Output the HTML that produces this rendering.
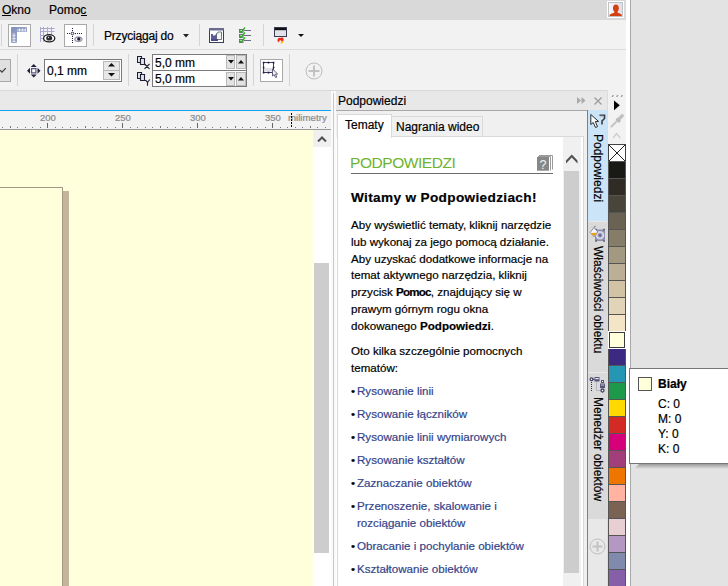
<!DOCTYPE html>
<html><head><meta charset="utf-8">
<style>
*{margin:0;padding:0;box-sizing:border-box}
html,body{width:728px;height:586px;overflow:hidden;background:#e3e3e3;font-family:"Liberation Sans",sans-serif;font-size:12px;color:#000}
.a{position:absolute}
.t{position:absolute;white-space:nowrap;line-height:14px;-webkit-text-stroke:0.2px currentColor}
</style></head><body>
<!-- window frame -->
<div class="a" style="left:0;top:0;width:630px;height:586px;background:#fff"></div>
<div class="a" style="left:630px;top:0;width:1px;height:586px;background:#a8a8a8"></div>

<!-- menu bar -->
<div class="a" style="left:0;top:0;width:626px;height:20px;background:#d9d9d9"></div>
<div class="t" style="left:2px;top:3px">Okno</div>
<div class="a" style="left:2px;top:15px;width:9px;height:1px;background:#000"></div>
<div class="t" style="left:49px;top:3px">Pomoc</div>
<div class="a" style="left:81px;top:15px;width:6px;height:1px;background:#000"></div>
<!-- user icon -->
<div class="a" style="left:607px;top:1px;width:17px;height:17px;background:#fff"></div>
<div class="a" style="left:608px;top:2px;width:15px;height:15px;border:1px solid #c0c4c9;background:linear-gradient(90deg,#f8f8fa,#e8eaf2 60%,#dde0ea)"></div><svg class="a" style="left:608px;top:2px" width="16" height="16" viewBox="0 0 16 16"><ellipse cx="7.9" cy="6.2" rx="2.9" ry="3.6" fill="#d4400f"/><rect x="6.3" y="8" width="3.3" height="3.5" fill="#d4400f"/><path d="M1.3 14 C1.8 11.8 4.2 11.3 6.3 10.8 H9.6 C11.7 11.3 13.6 11.8 14 14Z" fill="#d4400f"/></svg>

<!-- toolbar 1 -->
<div class="a" style="left:0;top:20px;width:626px;height:29px;background:#f2f2f2"></div>
<div class="a" style="left:0;top:49px;width:626px;height:1px;background:#dcdcdc"></div>
<div class="a" style="left:1px;top:24px;width:1px;height:22px;background:#d4d4d4"></div>
<div class="a" style="left:8px;top:24px;width:23px;height:23px;background:#fff;border:1px solid #a9a9a9"></div>
<svg class="a" style="left:11px;top:27px" width="16" height="16" viewBox="0 0 16 16"><defs><linearGradient id="rg" x1="0" y1="0" x2="1" y2="1"><stop offset="0" stop-color="#7f8fb8"/><stop offset="1" stop-color="#aab4d2"/></linearGradient></defs><path d="M1 0 H15 A1 1 0 0 1 16 1 V5 H6 V15 A1 1 0 0 1 5 16 H1 A1 1 0 0 1 0 15 V1 A1 1 0 0 1 1 0Z" fill="url(#rg)"/><path d="M7 4.5V2 M8.5 4.5V1.5 M10 4.5V2 M11.5 4.5V1.5 M13 4.5V2 M14.5 4.5V1.5 M1.5 7H4 M1.5 8.5H4.5 M1.5 10H4 M1.5 11.5H4.5 M1.5 13H4 M1.5 14.5H4.5" stroke="#eef1f8" stroke-width="0.9"/></svg>
<svg class="a" style="left:39px;top:26px" width="18" height="18" viewBox="0 0 18 18"><path d="M1.5 1v15 M4.5 1v15 M8.5 1v8 M12.5 1v7 M1 2.5h14.5 M1 5.5h14.5 M1 9.5h5 M1 12.5h3" stroke="#a9a9d2" stroke-width="1"/><ellipse cx="10.2" cy="12.3" rx="5.6" ry="3.6" fill="#fff" stroke="#1e1e24" stroke-width="1.3"/><ellipse cx="10.2" cy="12" rx="3" ry="2.6" fill="#2a2a30"/><path d="M8.8 10.8 l1.6 0.2 l-0.9 1.3z" fill="#fff"/></svg>
<div class="a" style="left:64px;top:24px;width:23px;height:23px;background:#fff;border:1px solid #a9a9a9"></div>
<svg class="a" style="left:66px;top:27px" width="18" height="17" viewBox="0 0 18 17"><g fill="#1c1c40"><rect x="6" y="1" width="1" height="1"/><rect x="6" y="3" width="1" height="1"/><rect x="6" y="9" width="1" height="1"/><rect x="6" y="11" width="1" height="1"/><rect x="6" y="13" width="1" height="1"/><rect x="6" y="15" width="1" height="1"/><rect x="1" y="6" width="1" height="1"/><rect x="3" y="6" width="1" height="1"/><rect x="9" y="6" width="1" height="1"/><rect x="11" y="6" width="1" height="1"/><rect x="13" y="6" width="1" height="1"/><rect x="15" y="6" width="1" height="1"/></g><circle cx="6.5" cy="6.5" r="1.3" fill="#fff" stroke="#1c1c40" stroke-width="0.9"/><ellipse cx="12.4" cy="12.3" rx="4.3" ry="3" fill="#c9c9d6"/><ellipse cx="12.4" cy="12.3" rx="3.4" ry="2.3" fill="#f0f0f6" stroke="#77778a" stroke-width="0.8"/><circle cx="12.8" cy="12" r="1.7" fill="#202035"/></svg>
<div class="a" style="left:93px;top:24px;width:1px;height:22px;background:#d4d4d4"></div>
<div class="t" style="left:104px;top:29px;letter-spacing:-0.2px">Przyciągaj do</div>
<svg class="a" style="left:183px;top:34px" width="6" height="4"><path d="M0 0h6L3 3.5Z" fill="#222"/></svg>
<div class="a" style="left:199px;top:24px;width:1px;height:22px;background:#d4d4d4"></div>
<svg class="a" style="left:209px;top:28px" width="16" height="16" viewBox="0 0 16 16"><rect x="0.5" y="0.5" width="14" height="14" fill="#fff" stroke="#3c3c55" stroke-width="1"/><rect x="0" y="0" width="15" height="2.5" fill="#6c6c90"/><path d="M2 13 V6 H4 V7.5 L6 7.5 L7 6 H9 V13Z" fill="#5a5aa0"/><path d="M7.5 11.5 V5.5 L9 4 H12.5 V11.5Z" fill="#f4f8f4" stroke="#556" stroke-width="0.8"/><path d="M9 4 L9 5.5 L7.5 5.5" fill="#9cc" stroke="#6a9" stroke-width="0.7"/><rect x="2" y="11" width="7" height="2" fill="#4a4a8a"/></svg>
<svg class="a" style="left:238px;top:26px" width="14" height="17" viewBox="0 0 14 17"><g fill="#eef" stroke="#666680" stroke-width="0.9"><rect x="1.5" y="3.5" width="3.5" height="3"/><rect x="1.5" y="8.5" width="3.5" height="3"/><rect x="1.5" y="13.5" width="3.5" height="3"/></g><path d="M1.8 4.5 L3 6.3 L7 1.5 M1.8 9.5 L3 11.3 L7 6.5 M1.8 14.5 L3 16.3 L7 11.5" stroke="#2eaa1e" stroke-width="1.3" fill="none"/><path d="M6 4.5h7 M6 9.5h7 M6 14.5h7" stroke="#6a6a88" stroke-width="1"/></svg>
<div class="a" style="left:263px;top:24px;width:1px;height:22px;background:#d4d4d4"></div>
<svg class="a" style="left:274px;top:27px" width="14" height="17" viewBox="0 0 14 17"><rect x="0.5" y="0.5" width="12" height="9" fill="#e2e3ea" stroke="#3a3a50" stroke-width="1"/><rect x="1" y="1" width="11" height="2.2" fill="#111"/><path d="M4.5 11 C3 12.5 3 14.5 5 15.5 C5 14 6 13 7 13.5 C8 14.2 7.5 15.5 6.5 16.5 C9 16 10.5 13 9 10.5Z" fill="#f0281c"/><path d="M6.5 16.5 C7.8 15.8 8.2 14.5 7.5 13.8 C8.5 13.5 9.5 14.5 9 16Z" fill="#ffd000"/></svg>
<svg class="a" style="left:298px;top:34px" width="6" height="3"><path d="M0 0h6L3 3Z" fill="#111"/></svg>

<!-- toolbar 2 -->
<div class="a" style="left:0;top:50px;width:626px;height:40px;background:#f2f2f2"></div>
<div class="a" style="left:0;top:90px;width:626px;height:1px;background:#d8d8d8"></div>
<div class="a" style="left:-2px;top:59px;width:13px;height:23px;background:#e0e0e0;border:1px solid #a8a8a8"></div>
<svg class="a" style="left:0;top:67px" width="8" height="7"><path d="M0 3.2L2 5.2L5.8 1.2" stroke="#3a3a3a" stroke-width="1.2" fill="none"/></svg>
<div class="a" style="left:17px;top:54px;width:1px;height:32px;background:#d4d4d4"></div>
<svg class="a" style="left:27px;top:64px" width="14" height="14" viewBox="0 0 14 14"><path d="M6.75 0 L9.75 3 H3.75Z M6.75 13.5 L3.75 10.5 H9.75Z M0 6.75 L3 3.75 V9.75Z M13.5 6.75 L10.5 9.75 V3.75Z" fill="#20203a"/><rect x="4.6" y="4.6" width="4.3" height="4.3" fill="#fff" stroke="#55557a" stroke-width="1.2"/></svg>
<div class="a" style="left:44px;top:59px;width:78px;height:23px;background:#fff;border:1px solid #7a7a7a"></div>
<div class="t" style="left:47px;top:64px">0,1 mm</div>
<div class="a" style="left:103px;top:61px;width:17px;height:10px;background:#e8e8e8;border:1px solid #b9b9b9"></div>
<div class="a" style="left:103px;top:70px;width:17px;height:10px;background:#e8e8e8;border:1px solid #b9b9b9"></div>
<svg class="a" style="left:108px;top:63px" width="7" height="4"><path d="M0 3.5h7L3.5 0Z" fill="#111"/></svg>
<svg class="a" style="left:108px;top:73px" width="7" height="4"><path d="M0 0h7L3.5 3.5Z" fill="#111"/></svg>
<div class="a" style="left:128px;top:54px;width:1px;height:32px;background:#d4d4d4"></div>
<svg class="a" style="left:137px;top:56px" width="14" height="14" viewBox="0 0 14 14"><path d="M0.5 0.5h4v6h-4z" fill="#e4e4f0" stroke="#1f1f33" stroke-width="1.1"/><path d="M3.5 2.5h4v6h-4z" fill="#e4e4f0" stroke="#1f1f33" stroke-width="1.1"/><path d="M7.5 8.5h1.5 M7.5 8 L12.5 12.8 M12.5 8 L7.5 12.8" stroke="#1f1f33" stroke-width="1.1" fill="none"/></svg>
<svg class="a" style="left:137px;top:72px" width="14" height="14" viewBox="0 0 14 14"><path d="M0.5 0.5h4v6h-4z" fill="#e4e4f0" stroke="#1f1f33" stroke-width="1.1"/><path d="M3.5 2.5h4v6h-4z" fill="#e4e4f0" stroke="#1f1f33" stroke-width="1.1"/><path d="M7.5 8.5h1.5 L10.5 10.5 M12.8 7.5 L10.5 10.5 V13.8" stroke="#1f1f33" stroke-width="1.1" fill="none"/></svg>
<div class="a" style="left:152px;top:54px;width:95px;height:33px;background:#fff;border:1px solid #7a7a7a"></div>
<div class="a" style="left:152px;top:70px;width:95px;height:1px;background:#7a7a7a"></div>
<div class="t" style="left:155px;top:56px">5,0 mm</div>
<div class="t" style="left:155px;top:72px">5,0 mm</div>
<div class="a" style="left:226px;top:55px;width:9px;height:14px;background:#e3e3e3;border:1px solid #b9b9b9"></div>
<div class="a" style="left:236px;top:55px;width:10px;height:14px;background:#e3e3e3;border:1px solid #b9b9b9"></div>
<div class="a" style="left:226px;top:72px;width:9px;height:14px;background:#e3e3e3;border:1px solid #b9b9b9"></div>
<div class="a" style="left:236px;top:72px;width:10px;height:14px;background:#e3e3e3;border:1px solid #b9b9b9"></div>
<svg class="a" style="left:228px;top:60px" width="6" height="4"><path d="M0 0h6L3 3.5Z" fill="#111"/></svg>
<svg class="a" style="left:238px;top:60px" width="6" height="4"><path d="M0 3.5h6L3 0Z" fill="#111"/></svg>
<svg class="a" style="left:228px;top:77px" width="6" height="4"><path d="M0 0h6L3 3.5Z" fill="#111"/></svg>
<svg class="a" style="left:238px;top:77px" width="6" height="4"><path d="M0 3.5h6L3 0Z" fill="#111"/></svg>
<div class="a" style="left:253px;top:54px;width:1px;height:32px;background:#d4d4d4"></div>
<div class="a" style="left:260px;top:59px;width:23px;height:23px;background:#fff;border:1px solid #a9a9a9"></div>
<svg class="a" style="left:261px;top:60px" width="20" height="20" viewBox="0 0 20 20"><rect x="2.5" y="8" width="10" height="3.5" fill="#dcdde8"/><rect x="2.5" y="2.5" width="10" height="10" fill="none" stroke="#3c3c60" stroke-width="1"/><path d="M1.8 1.8h1.6v1.6h-1.6zM6.7 1.8h1.6v1.6h-1.6zM11.8 1.8h1.6v1.6h-1.6zM1.8 6.7h1.6v1.6h-1.6zM11.8 6.7h1.6v1.6h-1.6zM1.8 11.8h1.6v1.6h-1.6zM6.7 11.8h1.6v1.6h-1.6z" fill="#1c1c40"/><path d="M11.5 9 L11.5 16 L13.2 14.6 L14.6 17.6 L15.8 17 L14.5 14.2 L16.6 14Z" fill="#f4f4f8" stroke="#50506a" stroke-width="0.9"/></svg>
<div class="a" style="left:289px;top:54px;width:1px;height:32px;background:#d4d4d4"></div>
<svg class="a" style="left:305px;top:62px" width="18" height="18" viewBox="0 0 18 18"><circle cx="9" cy="9" r="8" fill="none" stroke="#bdbdbd" stroke-width="1"/><path d="M9 3.5v11M3.5 9h11" stroke="#c2c2c2" stroke-width="2"/></svg>

<!-- gray region under toolbar (left) -->
<div class="a" style="left:0;top:91px;width:331px;height:19px;background:#e9e9e9"></div>
<div class="a" style="left:0;top:110px;width:331px;height:1px;background:#12a2f2"></div>
<!-- ruler -->
<div class="a" style="left:0;top:111px;width:331px;height:18px;background:#f2f2f2"></div>
<div class="a" style="left:0;top:129px;width:331px;height:1px;background:#9a9a9a"></div>
<div id="ruler"><div class="a" style="left:2px;top:127px;width:1px;height:1px;background:#777"></div><div class="a" style="left:10px;top:126px;width:1px;height:2px;background:#777"></div><div class="a" style="left:17px;top:127px;width:1px;height:1px;background:#777"></div><div class="a" style="left:25px;top:127px;width:1px;height:1px;background:#777"></div><div class="a" style="left:32px;top:127px;width:1px;height:1px;background:#777"></div><div class="a" style="left:40px;top:127px;width:1px;height:1px;background:#777"></div><div class="a" style="left:47px;top:123px;width:1px;height:5px;background:#666"></div><div class="a" style="left:55px;top:127px;width:1px;height:1px;background:#777"></div><div class="a" style="left:62px;top:127px;width:1px;height:1px;background:#777"></div><div class="a" style="left:70px;top:127px;width:1px;height:1px;background:#777"></div><div class="a" style="left:77px;top:127px;width:1px;height:1px;background:#777"></div><div class="a" style="left:85px;top:126px;width:1px;height:2px;background:#777"></div><div class="a" style="left:92px;top:127px;width:1px;height:1px;background:#777"></div><div class="a" style="left:100px;top:127px;width:1px;height:1px;background:#777"></div><div class="a" style="left:107px;top:127px;width:1px;height:1px;background:#777"></div><div class="a" style="left:115px;top:127px;width:1px;height:1px;background:#777"></div><div class="a" style="left:122px;top:123px;width:1px;height:5px;background:#666"></div><div class="a" style="left:130px;top:127px;width:1px;height:1px;background:#777"></div><div class="a" style="left:137px;top:127px;width:1px;height:1px;background:#777"></div><div class="a" style="left:145px;top:127px;width:1px;height:1px;background:#777"></div><div class="a" style="left:152px;top:127px;width:1px;height:1px;background:#777"></div><div class="a" style="left:160px;top:126px;width:1px;height:2px;background:#777"></div><div class="a" style="left:167px;top:127px;width:1px;height:1px;background:#777"></div><div class="a" style="left:175px;top:127px;width:1px;height:1px;background:#777"></div><div class="a" style="left:182px;top:127px;width:1px;height:1px;background:#777"></div><div class="a" style="left:190px;top:127px;width:1px;height:1px;background:#777"></div><div class="a" style="left:197px;top:123px;width:1px;height:5px;background:#666"></div><div class="a" style="left:205px;top:127px;width:1px;height:1px;background:#777"></div><div class="a" style="left:212px;top:127px;width:1px;height:1px;background:#777"></div><div class="a" style="left:220px;top:127px;width:1px;height:1px;background:#777"></div><div class="a" style="left:227px;top:127px;width:1px;height:1px;background:#777"></div><div class="a" style="left:235px;top:126px;width:1px;height:2px;background:#777"></div><div class="a" style="left:242px;top:127px;width:1px;height:1px;background:#777"></div><div class="a" style="left:250px;top:127px;width:1px;height:1px;background:#777"></div><div class="a" style="left:257px;top:127px;width:1px;height:1px;background:#777"></div><div class="a" style="left:265px;top:127px;width:1px;height:1px;background:#777"></div><div class="a" style="left:272px;top:123px;width:1px;height:5px;background:#666"></div><div class="a" style="left:280px;top:127px;width:1px;height:1px;background:#777"></div><div class="a" style="left:287px;top:127px;width:1px;height:1px;background:#777"></div><div class="a" style="left:295px;top:127px;width:1px;height:1px;background:#777"></div><div class="a" style="left:302px;top:127px;width:1px;height:1px;background:#777"></div><div class="a" style="left:310px;top:126px;width:1px;height:2px;background:#777"></div><div class="a" style="left:317px;top:127px;width:1px;height:1px;background:#777"></div><div class="a" style="left:325px;top:127px;width:1px;height:1px;background:#777"></div><div class="t" style="left:40px;top:112px;font-size:9.5px;line-height:12px;color:#8a8a8a">200</div><div class="t" style="left:115px;top:112px;font-size:9.5px;line-height:12px;color:#8a8a8a">250</div><div class="t" style="left:190px;top:112px;font-size:9.5px;line-height:12px;color:#8a8a8a">300</div><div class="t" style="left:265px;top:112px;font-size:9.5px;line-height:12px;color:#8a8a8a">350</div><div class="t" style="left:288px;top:112px;font-size:9.7px;line-height:12px;color:#8a8a8a">milimetry</div><div class="a" style="left:291px;top:113px;width:1px;height:15px;background:repeating-linear-gradient(#000 0 2px,transparent 2px 3px)"></div></div><!--/ruler-->
<!-- canvas -->
<div class="a" style="left:0;top:130px;width:313px;height:456px;background:#ffffdc"></div>
<div class="a" style="left:-1px;top:187px;width:64px;height:400px;border:1px solid #a39883;border-left:none;border-bottom:none"></div>
<div class="a" style="left:63px;top:191px;width:6px;height:395px;background:#c4b59c"></div>
<!-- canvas scrollbar -->
<div class="a" style="left:313px;top:130px;width:18px;height:456px;background:#fff"></div>
<div class="a" style="left:313px;top:130px;width:18px;height:17px;background:#f0f0f0"></div>
<svg class="a" style="left:317px;top:136px" width="10" height="6"><path d="M1 5.5L5 1.5L9 5.5" stroke="#505050" stroke-width="2" fill="none"/></svg>
<div class="a" style="left:314px;top:263px;width:15px;height:290px;background:#cdcdcd"></div>
<!-- splitter -->
<div class="a" style="left:331px;top:91px;width:5px;height:495px;background:#fafafa"></div>
<div class="a" style="left:333px;top:93px;width:1px;height:493px;background:#c8c8c8"></div>

<!-- docker -->
<div class="a" style="left:336px;top:91px;width:271px;height:19px;background:#e8e8e8"></div>
<div class="a" style="left:336px;top:110px;width:251px;height:1px;background:#a8a8a8"></div>
<div class="t" style="left:338px;top:94px">Podpowiedzi</div>
<svg class="a" style="left:577px;top:97px" width="9" height="7"><path d="M0 0l4 3.5L0 7zM4.5 0l4 3.5L4.5 7z" fill="#a9a9a9"/></svg>
<svg class="a" style="left:594px;top:97px" width="8" height="8"><path d="M0.5 0.5l7 7M7.5 0.5l-7 7" stroke="#9a9a9a" stroke-width="1.2"/></svg>
<div class="a" style="left:336px;top:111px;width:251px;height:475px;background:#f0f0f0"></div><div class="a" style="left:336px;top:137px;width:1px;height:449px;background:#fff"></div>
<!-- tabs -->
<div class="a" style="left:391px;top:116px;width:92px;height:21px;background:#f0f0f0;border:1px solid #d9d9d9;border-bottom:none"></div>
<div class="t" style="left:396px;top:120px">Nagrania wideo</div>
<div class="a" style="left:337px;top:136px;width:247px;height:450px;background:#fff;border:1px solid #d9d9d9;border-bottom:none"></div>
<div class="a" style="left:337px;top:114px;width:55px;height:24px;background:#fff;border:1px solid #d9d9d9;border-bottom:none"></div>
<div class="t" style="left:345px;top:118px">Tematy</div>
<!-- help scrollbar -->
<div class="a" style="left:563px;top:137px;width:18px;height:449px;background:#f0f0f0"></div>
<svg class="a" style="left:566px;top:154px" width="12" height="10" viewBox="0 0 12 10"><path d="M0 6.5 L5.75 0.5 L11.5 6.5 V9.5 L5.75 3.5 L0 9.5Z" fill="#505050"/></svg>
<div class="a" style="left:564px;top:171px;width:15px;height:402px;background:#cdcdcd"></div>

<!-- help content -->
<div class="t" style="left:350px;top:154px;font-size:15.5px;line-height:17px;color:#6cb42e;letter-spacing:-0.45px;-webkit-text-stroke:0">PODPOWIEDZI</div>
<svg class="a" style="left:536px;top:155px" width="18" height="17" viewBox="0 0 18 17"><path d="M3 0.5 H16.5 V14.5" fill="none" stroke="#9a9a9a" stroke-width="1"/><path d="M2 1.5 H14.5 V15.5" fill="none" stroke="#9a9a9a" stroke-width="1"/><rect x="13" y="2" width="1" height="13.5" fill="#fff"/><rect x="1" y="2" width="12" height="13.7" fill="#878787"/><text x="7" y="13.5" font-family="Liberation Sans" font-size="12.5" fill="#f4f4f4" text-anchor="middle">?</text></svg>
<div class="a" style="left:351px;top:173px;width:202px;height:1px;background:#6b6b6b"></div>
<div class="t" style="left:351px;top:190px;font-size:13.6px;font-weight:bold;line-height:16px;letter-spacing:0.35px">Witamy w Podpowiedziach!</div>
<div class="t" style="left:351px;top:217px;font-size:11.6px;line-height:16.8px">Aby wyświetlić tematy, kliknij narzędzie<br>lub wykonaj za jego pomocą działanie.<br>Aby uzyskać dodatkowe informacje na<br>temat aktywnego narzędzia, kliknij<br>przycisk <b style="letter-spacing:-0.8px">Pomoc</b>, znajdujący się w<br>prawym górnym rogu okna<br>dokowanego <b>Podpowiedzi</b>.</div>
<div class="t" style="left:351px;top:343px;font-size:11.6px;line-height:16.8px">Oto kilka szczególnie pomocnych<br>tematów:</div>
<div class="t" style="left:351px;top:383px;font-size:11.6px;line-height:16.8px;color:#34448a">
<div style="position:absolute;top:0px;left:0;color:#000">•</div><div style="position:absolute;top:0px;left:6px">Rysowanie linii</div>
<div style="position:absolute;top:23px;left:0;color:#000">•</div><div style="position:absolute;top:23px;left:6px">Rysowanie łączników</div>
<div style="position:absolute;top:46px;left:0;color:#000">•</div><div style="position:absolute;top:46px;left:6px">Rysowanie linii wymiarowych</div>
<div style="position:absolute;top:69px;left:0;color:#000">•</div><div style="position:absolute;top:69px;left:6px">Rysowanie kształtów</div>
<div style="position:absolute;top:92px;left:0;color:#000">•</div><div style="position:absolute;top:92px;left:6px">Zaznaczanie obiektów</div>
<div style="position:absolute;top:115px;left:0;color:#000">•</div><div style="position:absolute;top:115px;left:6px">Przenoszenie, skalowanie i<br>rozciąganie obiektów</div>
<div style="position:absolute;top:155px;left:0;color:#000">•</div><div style="position:absolute;top:155px;left:6px">Obracanie i pochylanie obiektów</div>
<div style="position:absolute;top:178px;left:0;color:#000">•</div><div style="position:absolute;top:178px;left:6px">Kształtowanie obiektów</div>
</div>

<!-- vertical tabs column -->
<div class="a" style="left:584px;top:111px;width:3px;height:475px;background:#f0f0f0"></div>
<div class="a" style="left:587px;top:110px;width:1px;height:476px;background:#12a2f2"></div>
<div class="a" style="left:588px;top:110px;width:19px;height:476px;background:#e8e8e8"></div>
<div class="a" style="left:588px;top:110px;width:19px;height:111px;background:#cce4f7"></div>
<div class="a" style="left:588px;top:222px;width:19px;height:150px;background:#dadada"></div>
<div class="a" style="left:588px;top:373px;width:19px;height:146px;background:#dadada"></div>
<svg class="a" style="left:590px;top:113px" width="17" height="17" viewBox="0 0 17 17"><path d="M0.8 1.5 L0.8 11.5 L3.2 9.5 L5.5 14.5 L7.5 13.6 L5.3 8.6 L8.5 8.4Z" fill="#fafafa" stroke="#2a2a2a" stroke-width="1"/><path d="M9.5 2.2 H14.5 V5.5 L12 8 V11.5" fill="none" stroke="#3a3a3a" stroke-width="1.6"/><path d="M10 3 H13.5" stroke="#9a9aa8" stroke-width="0.8"/></svg>
<div class="t" style="left:591px;top:134px;width:70px;transform-origin:0 0;transform:translate(14px,0) rotate(90deg)">Podpowiedzi</div>
<svg class="a" style="left:589px;top:225px" width="17" height="17" viewBox="0 0 17 17"><path d="M6 4.5 L16 4.5 L16 16 L6 16Z" fill="#8e8ea8"/><circle cx="11" cy="10.3" r="4.3" fill="#d4d4ec"/><circle cx="11" cy="10.3" r="2.4" fill="#9a9ab8"/><circle cx="11" cy="10.3" r="1.1" fill="#55557a"/><path d="M6 4.5 h2 M14 4.5h2 M6 16h2 M14 16h2" stroke="#6a6a80" stroke-width="1.5"/><path d="M1.2 7.3 L5 2.5 L8.8 7 L5 11.8Z" fill="#f4f4fa" stroke="#8c8ca2" stroke-width="1"/><path d="M2 8 L8 7.8 L5 11.2Z" fill="#f0a000"/><path d="M5 2.5 L6.5 0.8" stroke="#8c8ca2" stroke-width="1.2"/></svg>
<div class="t" style="left:591px;top:246px;transform-origin:0 0;transform:translate(14px,0) rotate(90deg)">Właściwości obiektu</div>
<svg class="a" style="left:589px;top:376px" width="17" height="17" viewBox="0 0 17 17"><path d="M7.5 5.5 V14.5 H12" stroke="#b4b4c4" stroke-width="1" fill="none"/><g fill="#303050"><rect x="2" y="6" width="1" height="1"/><rect x="2" y="8" width="1" height="1"/><rect x="2" y="10" width="1" height="1"/><rect x="2" y="12" width="1" height="1"/><rect x="2" y="14" width="1" height="1"/></g><path d="M4 3.3 H5.5" stroke="#404060" stroke-width="1.2"/><circle cx="2.5" cy="3.3" r="1.4" fill="#fff" stroke="#404060" stroke-width="1.2"/><rect x="5.5" y="1" width="5" height="4.5" fill="#55557a"/><rect x="6.3" y="2" width="3.4" height="1.2" fill="#e6e6f2"/><rect x="12" y="4" width="3" height="3" fill="#55557a"/><rect x="13" y="5" width="1" height="1" fill="#fff"/><rect x="11" y="7.5" width="5" height="4.5" fill="#55557a"/><rect x="11.8" y="8.5" width="3.4" height="1" fill="#c8c8e0"/><circle cx="13.5" cy="14.5" r="1.5" fill="#fff" stroke="#404060" stroke-width="1.3"/></svg>
<div class="t" style="left:591px;top:397px;transform-origin:0 0;transform:translate(14px,0) rotate(90deg)">Menedżer obiektów</div>
<svg class="a" style="left:589px;top:538px" width="17" height="17" viewBox="0 0 17 17"><circle cx="8.5" cy="8.5" r="7.5" fill="none" stroke="#bdbdbd" stroke-width="1"/><path d="M8.5 3.5v10M3.5 8.5h10" stroke="#c2c2c2" stroke-width="2"/></svg>

<!-- palette -->
<div class="a" style="left:607px;top:90px;width:19px;height:496px;background:#f2f2f2;border-left:1px solid #dcdcdc"></div>
<svg class="a" style="left:611px;top:95px" width="12" height="3"><path d="M0.5 2l1-2h1.5l-1 2zM5 2l1-2h1.5l-1 2zM9.5 2l1-2h1.5l-1 2z" fill="#a0a0a0"/></svg>
<svg class="a" style="left:614px;top:100px" width="6" height="11"><path d="M0 0.5L5.8 5.3L0 10.2Z" fill="#000"/></svg>
<svg class="a" style="left:609px;top:112px" width="16" height="17" viewBox="0 0 16 17"><path d="M2.5 14.5 L9 8" stroke="#c8c8c8" stroke-width="2.4" stroke-linecap="round"/><path d="M7.5 6.5 L11 10" stroke="#bababa" stroke-width="2.6"/><path d="M10.5 6.5 L13.2 3.8" stroke="#c0c0c0" stroke-width="3.4" stroke-linecap="round"/></svg>
<svg class="a" style="left:612px;top:132px" width="10" height="7" viewBox="0 0 10 7"><path d="M1 6 L4.6 1.6 L8.2 6" stroke="#cdcdcd" stroke-width="1.3" fill="none"/></svg>
<div id="pal"><div class="a" style="left:608px;top:144px;width:18px;height:18px;background:#fff;border:1px solid #444"></div><svg class="a" style="left:608px;top:144px" width="18" height="18"><path d="M1 1L17 17M17 1L1 17" stroke="#222" stroke-width="1"/></svg><div class="a" style="left:608px;top:161px;width:18px;height:18px;background:#191915;border:1px solid #555"></div><div class="a" style="left:608px;top:178px;width:18px;height:18px;background:#302b24;border:1px solid #555"></div><div class="a" style="left:608px;top:195px;width:18px;height:18px;background:#4a453a;border:1px solid #555"></div><div class="a" style="left:608px;top:212px;width:18px;height:18px;background:#6a6354;border:1px solid #555"></div><div class="a" style="left:608px;top:229px;width:18px;height:18px;background:#867d69;border:1px solid #555"></div><div class="a" style="left:608px;top:246px;width:18px;height:18px;background:#a39880;border:1px solid #555"></div><div class="a" style="left:608px;top:263px;width:18px;height:18px;background:#bbb095;border:1px solid #555"></div><div class="a" style="left:608px;top:280px;width:18px;height:18px;background:#d1c3a4;border:1px solid #555"></div><div class="a" style="left:608px;top:297px;width:18px;height:18px;background:#e2d4b6;border:1px solid #555"></div><div class="a" style="left:608px;top:314px;width:18px;height:18px;background:#f4e5c6;border:1px solid #555"></div><div class="a" style="left:608px;top:348px;width:18px;height:18px;background:#3c2a82;border:1px solid #555"></div><div class="a" style="left:608px;top:365px;width:18px;height:18px;background:#2596b4;border:1px solid #555"></div><div class="a" style="left:608px;top:382px;width:18px;height:18px;background:#1c9a4a;border:1px solid #555"></div><div class="a" style="left:608px;top:399px;width:18px;height:18px;background:#ffd900;border:1px solid #555"></div><div class="a" style="left:608px;top:416px;width:18px;height:18px;background:#d42a25;border:1px solid #555"></div><div class="a" style="left:608px;top:433px;width:18px;height:18px;background:#d6007a;border:1px solid #555"></div><div class="a" style="left:608px;top:450px;width:18px;height:18px;background:#a23f7a;border:1px solid #555"></div><div class="a" style="left:608px;top:467px;width:18px;height:18px;background:#ee7600;border:1px solid #555"></div><div class="a" style="left:608px;top:484px;width:18px;height:18px;background:#ffb3a0;border:1px solid #555"></div><div class="a" style="left:608px;top:501px;width:18px;height:18px;background:#7a6352;border:1px solid #555"></div><div class="a" style="left:608px;top:518px;width:18px;height:18px;background:#e8cfd3;border:1px solid #555"></div><div class="a" style="left:608px;top:535px;width:18px;height:18px;background:#b497c3;border:1px solid #555"></div><div class="a" style="left:608px;top:552px;width:18px;height:18px;background:#7f8aad;border:1px solid #555"></div><div class="a" style="left:608px;top:569px;width:18px;height:18px;background:#8560a8;border:1px solid #555"></div><div class="a" style="left:608px;top:331px;width:18px;height:18px;background:#fff"></div><div class="a" style="left:609px;top:332px;width:16px;height:16px;background:#ffffdc;border:1px solid #3c3c3c"></div></div><!--/pal-->
<!-- tooltip -->
<div class="a" style="left:634px;top:464px;width:94px;height:5px;background:linear-gradient(rgba(0,0,0,0.32),rgba(0,0,0,0));clip-path:polygon(0 100%,5px 0,100% 0,100% 100%)"></div>
<div class="a" style="left:629px;top:368px;width:110px;height:96px;background:#fff;border:1px solid #777"></div>
<div class="a" style="left:638px;top:377px;width:14px;height:14px;background:#ffffdc;border:1px solid #555"></div>
<div class="t" style="left:658px;top:377px;font-weight:bold">Biały</div>
<div class="t" style="left:658px;top:397px;line-height:15px">C: 0<br>M: 0<br>Y: 0<br>K: 0</div>
</body></html>
